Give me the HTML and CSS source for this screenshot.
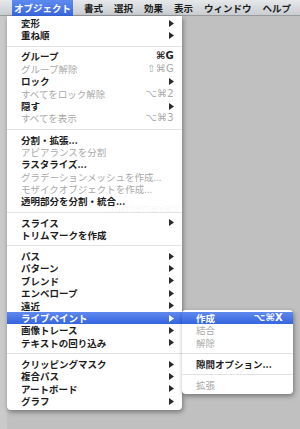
FILE: index.html
```html
<!DOCTYPE html>
<html lang="ja">
<head>
    <meta charset="UTF-8">
    <title>オブジェクト</title>
    <link rel="stylesheet" href="styles.css">
</head>
<body>
    <div class="menubar">
        <span class="title active">オブジェクト</span>
        <span class="title">書式</span>
        <span class="title">選択</span>
        <span class="title">効果</span>
        <span class="title">表示</span>
        <span class="title">ウィンドウ</span>
        <span class="title">ヘルプ</span>
    </div>

    <div class="desk">
        <div class="menu">
            <div class="item"><span>変形</span><svg class="arrow" width="5" height="7" viewBox="0 0 5 7"><polygon points="0,0 5,3.5 0,7"/></svg></div>
            <div class="item"><span>重ね順</span><svg class="arrow" width="5" height="7" viewBox="0 0 5 7"><polygon points="0,0 5,3.5 0,7"/></svg></div>
            <div class="sep"></div>
            <div class="item"><span>グループ</span><span class="key">⌘G</span></div>
            <div class="item off"><span>グループ解除</span><span class="key">⇧⌘G</span></div>
            <div class="item"><span>ロック</span><svg class="arrow" width="5" height="7" viewBox="0 0 5 7"><polygon points="0,0 5,3.5 0,7"/></svg></div>
            <div class="item off"><span>すべてをロック解除</span><span class="key">⌥⌘2</span></div>
            <div class="item"><span>隠す</span><svg class="arrow" width="5" height="7" viewBox="0 0 5 7"><polygon points="0,0 5,3.5 0,7"/></svg></div>
            <div class="item off"><span>すべてを表示</span><span class="key">⌥⌘3</span></div>
            <div class="sep"></div>
            <div class="item"><span>分割・拡張...</span></div>
            <div class="item off"><span>アピアランスを分割</span></div>
            <div class="item"><span>ラスタライズ...</span></div>
            <div class="item off"><span>グラデーションメッシュを作成...</span></div>
            <div class="item off"><span>モザイクオブジェクトを作成...</span></div>
            <div class="item"><span>透明部分を分割・統合...</span></div>
            <div class="sep"></div>
            <div class="item"><span>スライス</span><svg class="arrow" width="5" height="7" viewBox="0 0 5 7"><polygon points="0,0 5,3.5 0,7"/></svg></div>
            <div class="item"><span>トリムマークを作成</span></div>
            <div class="sep"></div>
            <div class="item"><span>パス</span><svg class="arrow" width="5" height="7" viewBox="0 0 5 7"><polygon points="0,0 5,3.5 0,7"/></svg></div>
            <div class="item"><span>パターン</span><svg class="arrow" width="5" height="7" viewBox="0 0 5 7"><polygon points="0,0 5,3.5 0,7"/></svg></div>
            <div class="item"><span>ブレンド</span><svg class="arrow" width="5" height="7" viewBox="0 0 5 7"><polygon points="0,0 5,3.5 0,7"/></svg></div>
            <div class="item"><span>エンベロープ</span><svg class="arrow" width="5" height="7" viewBox="0 0 5 7"><polygon points="0,0 5,3.5 0,7"/></svg></div>
            <div class="item"><span>遠近</span><svg class="arrow" width="5" height="7" viewBox="0 0 5 7"><polygon points="0,0 5,3.5 0,7"/></svg></div>
            <div class="item selected">
                <span>ライブペイント</span><svg class="arrow" width="5" height="7" viewBox="0 0 5 7"><polygon points="0,0 5,3.5 0,7"/></svg>
                <!-- サブメニュー -->
                <div class="submenu">
                    <div class="item selected"><span>作成</span><span class="key">⌥⌘X</span></div>
                    <div class="item off"><span>結合</span></div>
                    <div class="item off"><span>解除</span></div>
                    <div class="sep"></div>
                    <div class="item"><span>隙間オプション...</span></div>
                    <div class="sep"></div>
                    <div class="item off"><span>拡張</span></div>
                </div>
            </div>
            <div class="item"><span>画像トレース</span><svg class="arrow" width="5" height="7" viewBox="0 0 5 7"><polygon points="0,0 5,3.5 0,7"/></svg></div>
            <div class="item"><span>テキストの回り込み</span><svg class="arrow" width="5" height="7" viewBox="0 0 5 7"><polygon points="0,0 5,3.5 0,7"/></svg></div>
            <div class="sep"></div>
            <div class="item"><span>クリッピングマスク</span><svg class="arrow" width="5" height="7" viewBox="0 0 5 7"><polygon points="0,0 5,3.5 0,7"/></svg></div>
            <div class="item"><span>複合パス</span><svg class="arrow" width="5" height="7" viewBox="0 0 5 7"><polygon points="0,0 5,3.5 0,7"/></svg></div>
            <div class="item"><span>アートボード</span><svg class="arrow" width="5" height="7" viewBox="0 0 5 7"><polygon points="0,0 5,3.5 0,7"/></svg></div>
            <div class="item"><span>グラフ</span><svg class="arrow" width="5" height="7" viewBox="0 0 5 7"><polygon points="0,0 5,3.5 0,7"/></svg></div>

            <span class="watermark">Tutorialmaniacs</span>
        </div>
    </div>
</body>
</html>
```

FILE: styles.css
```css
 body {
     margin: 0;
     padding: 0;
     width: 300px;
     height: 429px;
     overflow: hidden;
     background-color: #c0c0c0;
     font-family: "Noto Sans CJK JP", "DejaVu Sans", sans-serif;
 }

 .menubar {
     height: 16px;
     display: flex;
     align-items: center;
     gap: 7px;
     padding-left: 12px;
     background: linear-gradient(#e6e8ea, #c9cdd1);
     border-bottom: 1px solid #9a9a9a;
     box-sizing: border-box;
 }

 .title {
     font-size: 9.5px;
     font-weight: 700;
     line-height: 16px;
     padding: 0 2px;
     color: #1c1c1c;
 }

 .title.active {
     color: white;
     background: linear-gradient(#5f8bef, #3867df);
     margin-right: 2px;
 }

 .desk {
     height: 413px;
     padding-left: 7px;
     background: linear-gradient(to right, #cacaca 7px, #c0c0c0 7px);
 }

 .menu {
     position: relative;
     width: 175px;
     padding: 1px 0 3px;
     background-color: white;
     border-radius: 0 0 4px 4px;
     box-shadow: 1px 2px 5px rgba(0, 0, 0, 0.4);
 }

 .item {
     position: relative;
     display: flex;
     justify-content: space-between;
     align-items: center;
     height: 12.4px;
     padding: 0 8px 0 14px;
     font-size: 9.5px;
     font-weight: 700;
     line-height: 12.4px;
     color: #1c1c1c;
     white-space: nowrap;
 }

 .item.off {
     color: #a9a9a9;
     font-weight: 400;
 }

 .item.selected {
     color: white;
     background: linear-gradient(#6089ef, #3565de);
 }

 .arrow {
     fill: #2a2a2a;
 }

 .selected > .arrow {
     fill: white;
 }

 .key {
     font-family: "DejaVu Sans", sans-serif;
     font-size: 10px;
     letter-spacing: 0.3px;
 }

 .sep {
     height: 8.7px;
     display: flex;
     align-items: center;
 }

 .sep::before {
     content: "";
     flex: 1;
     height: 1px;
     background-color: #e2e2e2;
 }

 .submenu {
     position: absolute;
     left: 100%;
     top: -2px;
     width: 111px;
     padding: 2px 0 3px;
     background-color: white;
     border-radius: 4px;
     box-shadow: 1px 2px 5px rgba(0, 0, 0, 0.4);
 }

 .submenu .item {
     padding: 0 10px 0 14px;
 }

 .watermark {
     position: absolute;
     left: 102px;
     top: 187px;
     font-family: "Liberation Sans", sans-serif;
     font-size: 10px;
     color: rgba(0, 0, 0, 0.06);
 }
```
